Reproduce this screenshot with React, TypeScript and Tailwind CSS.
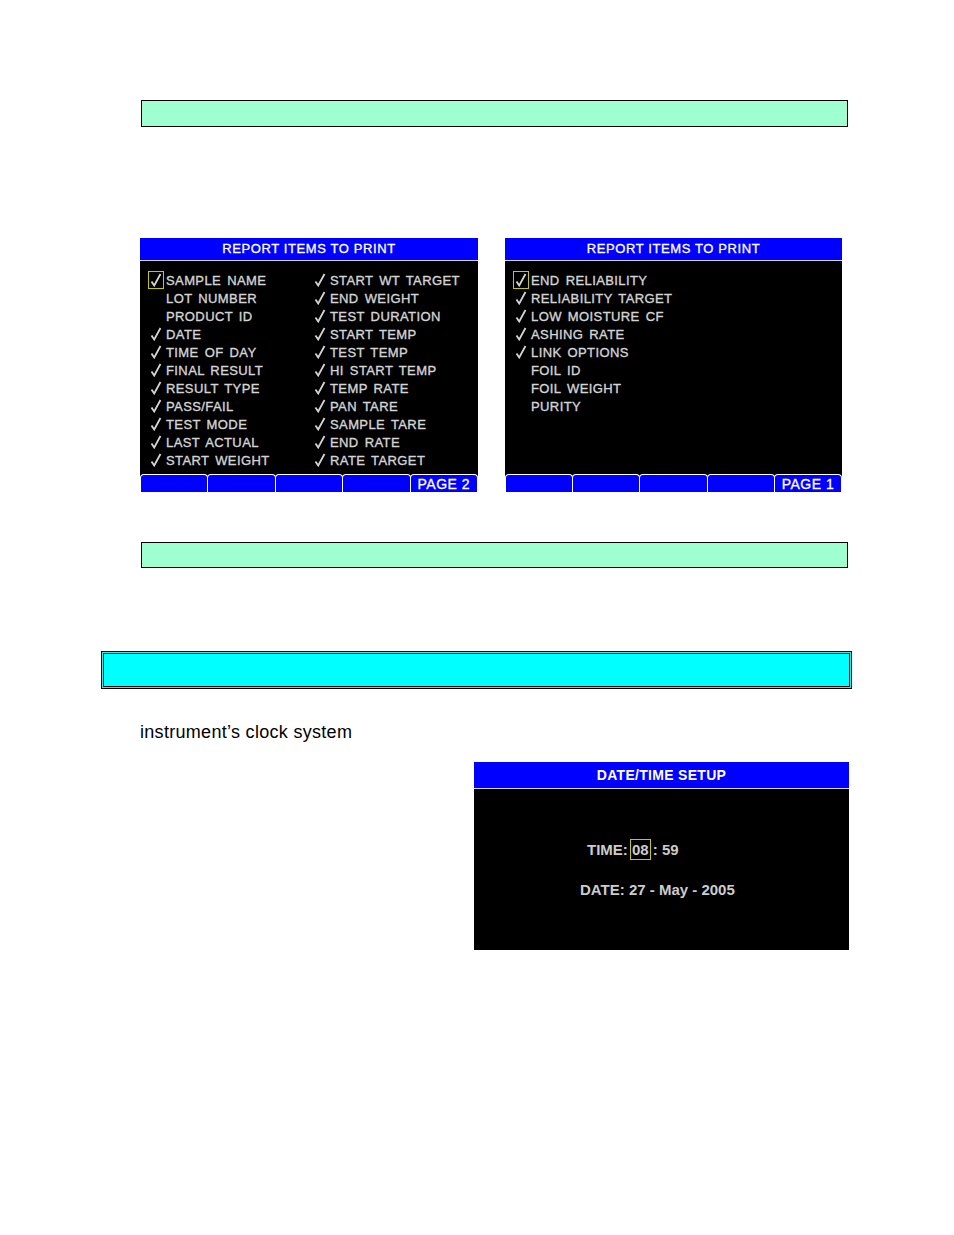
import React from 'react';

const screenFont = { fontFamily: '"Liberation Sans", Arial, sans-serif' };

type Item = { label: string; checked: boolean; focus?: boolean };

function Check({ focus }: { focus?: boolean }) {
  return (
    <div
      className={
        'w-[16px] h-[18px] flex items-center justify-center flex-shrink-0 ' +
        (focus ? 'border-[1.5px] border-[#c8c800]' : '')
      }
    >
      <svg width="12" height="14" viewBox="0 0 12 14">
        <path d="M1.5 8.5 L4.2 12.5 L10.5 1" fill="none" stroke="#d4d4d4" strokeWidth="1.8" strokeLinejoin="miter" />
      </svg>
    </div>
  );
}

function Row({ item }: { item: Item }) {
  return (
    <div className="flex items-center h-[18px] gap-[2px]">
      {item.checked ? <Check focus={item.focus} /> : <div className="w-[16px] flex-shrink-0" />}
      <span className="text-[13px] leading-none text-[#d4d4d4] tracking-[0.4px] [word-spacing:2px] [-webkit-text-stroke:0.35px_#d4d4d4] whitespace-nowrap">
        {item.label}
      </span>
    </div>
  );
}

function Tabs({ page }: { page: string }) {
  return (
    <div className="flex h-[18px]">
      {[0, 1, 2, 3, 4].map((i) => (
        <div
          key={i}
          className="flex-1 bg-[#0000ff] border-t border-x border-white rounded-t-[4px] -ml-px first:ml-0 flex items-center justify-center"
        >
          {i === 4 && (
            <span className="text-[14px] leading-none text-white tracking-[0.5px] [-webkit-text-stroke:0.3px_#ffffff]">
              {page}
            </span>
          )}
        </div>
      ))}
    </div>
  );
}

function ReportScreen({ columns, page, width }: { columns: Item[][]; page: string; width: string }) {
  return (
    <div className={'h-[254px] bg-black flex flex-col ' + width} style={screenFont}>
      <div className="h-[23px] bg-[#0000ff] border-b border-[#d8d8ff] flex items-center justify-center">
        <span className="text-[13px] text-white tracking-[0.6px] [-webkit-text-stroke:0.3px_#ffffff]">
          REPORT ITEMS TO PRINT
        </span>
      </div>
      <div className="flex-1 flex pt-[10px] pl-[8px]">
        {columns.map((col, ci) => (
          <div key={ci} className={ci === 0 && columns.length > 1 ? 'w-[164px]' : 'flex-1'}>
            {col.map((it) => (
              <Row key={it.label} item={it} />
            ))}
          </div>
        ))}
      </div>
      <Tabs page={page} />
    </div>
  );
}

const left: Item[] = [
  { label: 'SAMPLE NAME', checked: true, focus: true },
  { label: 'LOT NUMBER', checked: false },
  { label: 'PRODUCT ID', checked: false },
  { label: 'DATE', checked: true },
  { label: 'TIME OF DAY', checked: true },
  { label: 'FINAL RESULT', checked: true },
  { label: 'RESULT TYPE', checked: true },
  { label: 'PASS/FAIL', checked: true },
  { label: 'TEST MODE', checked: true },
  { label: 'LAST ACTUAL', checked: true },
  { label: 'START WEIGHT', checked: true },
];

const right: Item[] = [
  'START WT TARGET',
  'END WEIGHT',
  'TEST DURATION',
  'START TEMP',
  'TEST TEMP',
  'HI START TEMP',
  'TEMP RATE',
  'PAN TARE',
  'SAMPLE TARE',
  'END RATE',
  'RATE TARGET',
].map((label) => ({ label, checked: true }));

const page2: Item[] = [
  { label: 'END RELIABILITY', checked: true, focus: true },
  { label: 'RELIABILITY TARGET', checked: true },
  { label: 'LOW MOISTURE CF', checked: true },
  { label: 'ASHING RATE', checked: true },
  { label: 'LINK OPTIONS', checked: true },
  { label: 'FOIL ID', checked: false },
  { label: 'FOIL WEIGHT', checked: false },
  { label: 'PURITY', checked: false },
];

export default function App() {
  return (
    <div className="w-[954px] min-h-[1235px] bg-white pt-[100px]">
      <div className="ml-[141px] w-[707px] h-[27px] border border-black bg-[#9effcf]" />

      <div className="mt-[111px] ml-[140px] flex gap-[27px]">
        <ReportScreen columns={[left, right]} page="PAGE 2" width="w-[338px]" />
        <ReportScreen columns={[page2]} page="PAGE 1" width="w-[337px]" />
      </div>

      <div className="mt-[50px] ml-[141px] w-[707px] h-[26px] border border-black bg-[#9effcf]" />

      <div className="mt-[83px] ml-[101px] w-[751px] h-[38px] border-[3px] border-double border-black bg-[#00ffff]" />

      <p
        className="mt-[33px] ml-[140px] text-[18px] leading-[20px] tracking-[0.3px] text-black"
        style={{ fontFamily: '"Liberation Sans", Arial, sans-serif' }}
      >
        instrument’s clock system
      </p>

      <div className="mt-[20px] ml-[474px] w-[375px] h-[188px] bg-black flex flex-col" style={screenFont}>
        <div className="h-[27px] bg-[#0000ff] border-b border-[#d8d8ff] flex items-center justify-center">
          <span className="text-[14px] font-bold text-white tracking-[0.3px]">DATE/TIME SETUP</span>
        </div>
        <div className="flex-1 pt-[50px] text-[15px] font-bold text-[#cccccc] leading-none">
          <div className="pl-[113px] flex items-center h-[21px]">
            <span>TIME:</span>
            <span className="ml-[2px] w-[21px] h-[21px] border-[1.5px] border-[#c8c800] flex items-center justify-center">
              08
            </span>
            <span className="ml-[2px]">: 59</span>
          </div>
          <div className="pl-[106px] mt-[19px] flex items-center h-[21px]">
            <span>DATE: 27 - May - 2005</span>
          </div>
        </div>
      </div>
    </div>
  );
}
